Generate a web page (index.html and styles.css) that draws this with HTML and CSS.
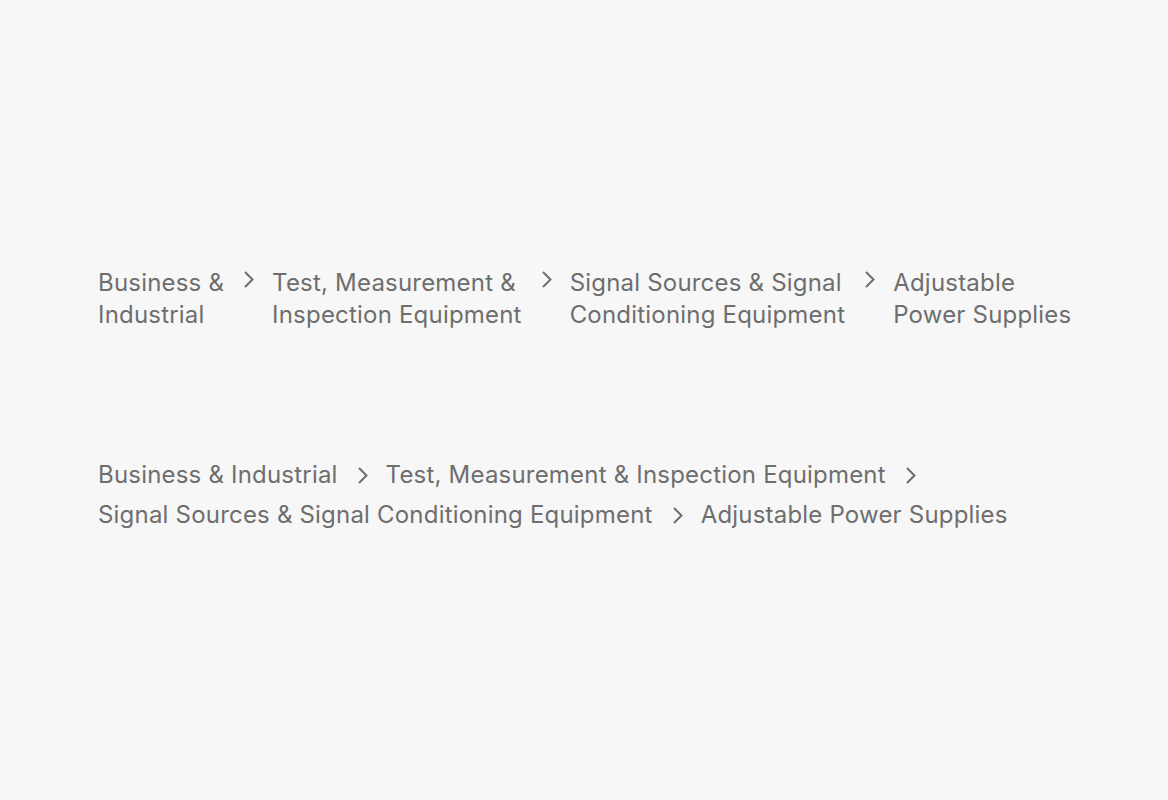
FILE: index.html
```html
<!DOCTYPE html>
<html lang="en">
<head>
    <meta charset="UTF-8">
    <meta name="viewport" content="width=device-width, initial-scale=1.0">
    <title>Breadcrumbs</title>
    <link rel="stylesheet" href="styles.css">
</head>
<body>

    <main class="page">
        <!-- stacked variant: each crumb wraps onto two lines -->
        <nav class="crumbs crumbs-stacked" aria-label="Breadcrumb">
            <a class="crumb" href="#">Business &amp;<br>Industrial</a>
            <svg class="chevron" viewBox="0 0 10 17" aria-hidden="true"><path d="M1 1l7.5 7.5L1 16"/></svg>
            <a class="crumb" href="#">Test, Measurement &amp;<br>Inspection Equipment</a>
            <svg class="chevron" viewBox="0 0 10 17" aria-hidden="true"><path d="M1 1l7.5 7.5L1 16"/></svg>
            <a class="crumb" href="#">Signal Sources &amp; Signal<br>Conditioning Equipment</a>
            <svg class="chevron" viewBox="0 0 10 17" aria-hidden="true"><path d="M1 1l7.5 7.5L1 16"/></svg>
            <span class="crumb">Adjustable<br>Power Supplies</span>
        </nav>

        <!-- inline variant: crumbs flow and wrap as whole items -->
        <nav class="crumbs crumbs-inline" aria-label="Breadcrumb">
            <span class="item"><a class="crumb" href="#">Business &amp; Industrial</a><svg class="chevron" viewBox="0 0 10 17" aria-hidden="true"><path d="M1 1l7.5 7.5L1 16"/></svg></span>
            <span class="item"><a class="crumb" href="#">Test, Measurement &amp; Inspection Equipment</a><svg class="chevron" viewBox="0 0 10 17" aria-hidden="true"><path d="M1 1l7.5 7.5L1 16"/></svg></span>
            <span class="item"><a class="crumb" href="#">Signal Sources &amp; Signal Conditioning Equipment</a><svg class="chevron" viewBox="0 0 10 17" aria-hidden="true"><path d="M1 1l7.5 7.5L1 16"/></svg></span>
            <span class="item"><span class="crumb">Adjustable Power Supplies</span></span>
        </nav>
    </main>

</body>
</html>
```

FILE: styles.css
```css
body {
    margin: 0;
    padding: 0;
    background-color: #f7f7f7;
    color: #6e6e6e;
    font-family: Inter, "Noto Sans", sans-serif;
    font-size: 24px;
    line-height: 32px;
    letter-spacing: 0.2px;
}
.page {
    width: 972px;
    margin: 0 auto;
    padding-top: 267px;
}
.crumbs {
    display: flex;
}
.crumb {
    color: #6e6e6e;
    text-decoration: none;
}
.chevron {
    width: 10px;
    height: 17px;
    flex: none;
    fill: none;
    stroke: #6e6e6e;
    stroke-width: 2;
}
.crumbs-stacked {
    align-items: flex-start;
}
.crumbs-stacked .crumb {
    flex: none;
    white-space: nowrap;
}
.crumbs-stacked .chevron {
    margin: 4px 18px 0 20px;
}
.crumbs-inline {
    flex-wrap: wrap;
    row-gap: 8px;
    margin-top: 128px;
}
.crumbs-inline .item {
    display: flex;
    align-items: center;
    white-space: nowrap;
}
.crumbs-inline .chevron {
    margin: 0 18px 0 20px;
}
```
